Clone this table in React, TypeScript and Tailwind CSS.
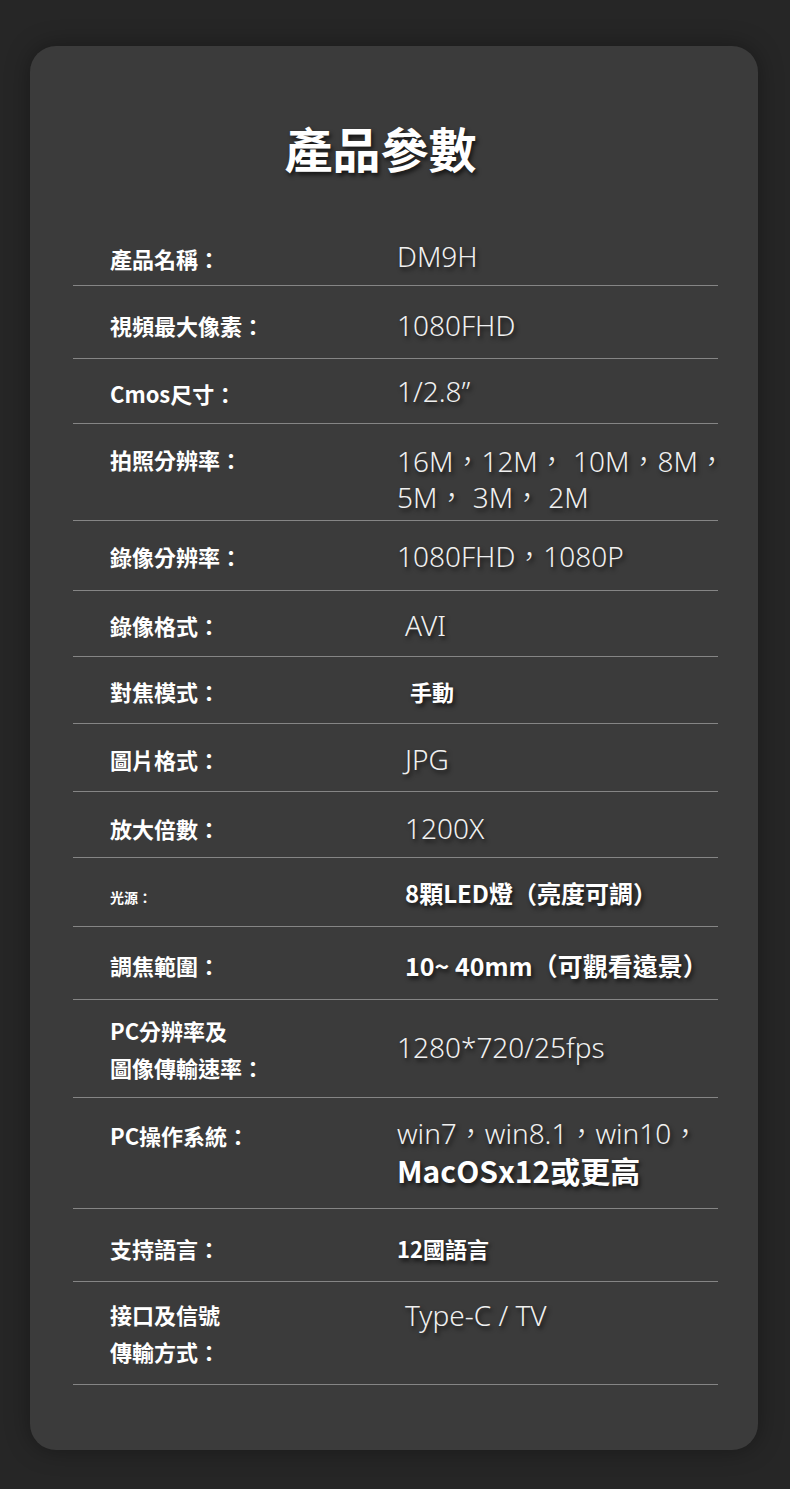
const cjk = "font-['Noto_Sans_CJK_TC','Noto_Sans_CJK_SC',sans-serif]";
const latin = "font-['Noto_Sans','Noto_Sans_CJK_TC',sans-serif]";
const shadow = '[text-shadow:2px_3px_4px_rgba(0,0,0,0.65)]';

function Row({
  h,
  lp,
  vp,
  label,
  children,
}: {
  h: string;
  lp: string;
  vp: string;
  label: React.ReactNode;
  children: React.ReactNode;
}) {
  return (
    <div className={`flex border-b border-[#858585] ${h}`}>
      <div className={`w-[324px] shrink-0 pl-[37px] ${lp}`}>
        <div className={`${cjk} text-[22px] font-bold leading-[36px] text-white`}>{label}</div>
      </div>
      <div className={`flex-1 whitespace-nowrap ${vp} ${shadow}`}>{children}</div>
    </div>
  );
}

const val = `${latin} text-[28px] font-light leading-[36px] text-[#f0f0f0]`;

export default function App() {
  return (
    <div className="min-h-[1489px] w-[790px] bg-[#262626] pt-[46px]">
      <div className="mx-[30px] w-[728px] rounded-[26px] bg-[#3b3b3b] pt-[77px] pb-[65px] pl-[43px] pr-[40px] shadow-[0_0_24px_rgba(0,0,0,0.35)]">
        <h1 className={`${cjk} text-center text-[48px] font-bold leading-[48px] text-white pr-[30px] ${shadow}`}>
          產品參數
        </h1>

        <div className="mt-[51px]">
          <Row h="h-[64px]" lp="pt-[18px]" vp="pt-[16px]" label="產品名稱：">
            <div className={val}>DM9H</div>
          </Row>
          <Row h="h-[73px]" lp="pt-[21px]" vp="pt-[21px]" label="視頻最大像素：">
            <div className={val}>1080FHD</div>
          </Row>
          <Row h="h-[65px]" lp="pt-[16px]" vp="pt-[14px]" label="Cmos尺寸：">
            <div className={val}>1/2.8”</div>
          </Row>
          <Row h="h-[97px]" lp="pt-[17px]" vp="pt-[19px]" label="拍照分辨率：">
            <div className={`${val} leading-[31px]`}>16M，12M， 10M，8M，</div>
            <div className={`${val} leading-[31px]`}>5M， 3M， 2M</div>
          </Row>
          <Row h="h-[70px]" lp="pt-[17px]" vp="pt-[17px]" label="錄像分辨率：">
            <div className={val}>1080FHD，1080P</div>
          </Row>
          <Row h="h-[66px]" lp="pt-[16px]" vp="pt-[16px]" label="錄像格式：">
            <div className={`${val} pl-[8px]`}>AVI</div>
          </Row>
          <Row h="h-[67px]" lp="pt-[16px]" vp="pt-[16px]" label="對焦模式：">
            <div className={`${cjk} pl-[13px] text-[22px] font-bold leading-[36px] text-white`}>手動</div>
          </Row>
          <Row h="h-[68px]" lp="pt-[17px]" vp="pt-[17px]" label="圖片格式：">
            <div className={`${val} pl-[8px]`}>JPG</div>
          </Row>
          <Row h="h-[66px]" lp="pt-[18px]" vp="pt-[18px]" label="放大倍數：">
            <div className={`${val} pl-[8px]`}>1200X</div>
          </Row>
          <Row h="h-[69px]" lp="pt-[17px]" vp="pt-[17px]" label={<span className="text-[14px]">光源：</span>}>
            <div className={`${cjk} pl-[8px] text-[24px] font-bold leading-[36px] text-white`}>
              8顆LED燈（亮度可調）
            </div>
          </Row>
          <Row h="h-[73px]" lp="pt-[20px]" vp="pt-[20px]" label="調焦範圍：">
            <div className={`${cjk} pl-[8px] text-[25px] font-bold leading-[36px] text-white`}>
              10~ 40mm（可觀看遠景）
            </div>
          </Row>
          <Row
            h="h-[98px]"
            lp="pt-[12px]"
            vp="pt-[29px]"
            label={
              <div className="leading-[37px]">
                PC分辨率及
                <br />
                圖像傳輸速率：
              </div>
            }
          >
            <div className={val}>1280*720/25fps</div>
          </Row>
          <Row h="h-[111px]" lp="pt-[19px]" vp="pt-[17px]" label="PC操作系統：">
            <div className={val}>win7，win8.1，win10，</div>
            <div className={`${cjk} text-[30px] font-bold leading-[38px] text-white`}>MacOSx12或更高</div>
          </Row>
          <Row h="h-[73px]" lp="pt-[21px]" vp="pt-[21px]" label="支持語言：">
            <div className={`${cjk} text-[22px] font-bold leading-[36px] text-white`}>12國語言</div>
          </Row>
          <Row
            h="h-[103px]"
            lp="pt-[14px]"
            vp="pt-[15px]"
            label={
              <div className="leading-[37px]">
                接口及信號
                <br />
                傳輸方式：
              </div>
            }
          >
            <div className={`${val} pl-[8px]`}>Type-C / TV</div>
          </Row>
        </div>
      </div>
    </div>
  );
}
